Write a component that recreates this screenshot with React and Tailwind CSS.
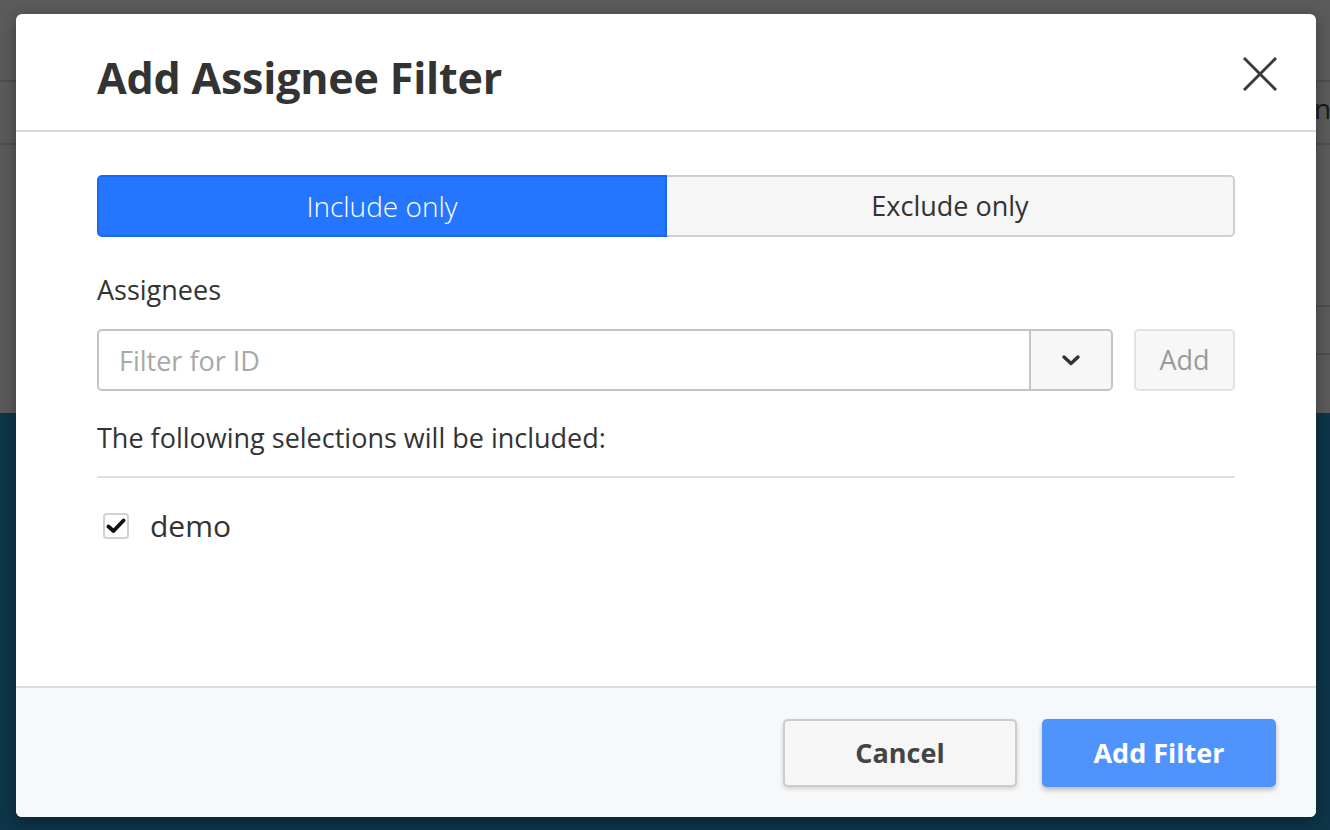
import React, { useState } from 'react';

// === ICONS ===
const CloseIcon = () => (
  <svg width="34" height="34" viewBox="0 0 34 34" fill="none">
    <path d="M2 2 L32 32 M32 2 L2 32" stroke="#3a3a3a" strokeWidth="3" strokeLinecap="square" />
  </svg>
);

const ChevronDown = () => (
  <svg width="20" height="12" viewBox="0 0 20 12" fill="none">
    <path d="M3 3 L10 9.5 L17 3" stroke="#333" strokeWidth="3.4" strokeLinecap="round" strokeLinejoin="round" />
  </svg>
);

const CheckMark = () => (
  <svg width="20" height="16" viewBox="0 0 20 16" fill="none">
    <path d="M2.5 8.5 L7.5 13 L17.5 2.5" stroke="#111" strokeWidth="3.8" strokeLinecap="round" strokeLinejoin="round" />
  </svg>
);

const App = () => {
  const [mode, setMode] = useState('include');
  const [checked, setChecked] = useState(true);

  return (
    <div className="relative w-[1330px] h-[830px] overflow-hidden font-['Open_Sans',sans-serif]">
      {/* === DIMMED PAGE BEHIND === */}
      <div className="flex flex-col h-full">
        <div className="h-[413px] bg-[#5b5b5b] flex flex-col">
          <div className="h-[82px] border-b-2 border-[#4e4e4e]" />
          <div className="h-[63px] border-b-2 border-[#4e4e4e]" />
          <div className="flex-1 flex flex-col items-end">
            <div className="h-[160px]" />
            <div className="w-[20px] h-[50px] border-t-2 border-b-2 border-[#4e4e4e]" />
          </div>
        </div>
        <div className="flex-1 bg-[#0e3549]" />
      </div>
      <span className="absolute left-[1314px] top-[94px] text-[28px] text-[#1a1a1a] leading-none">n</span>

      {/* === MODAL === */}
      <div className="absolute left-[16px] top-[14px] w-[1300px] h-[803px] bg-white rounded-[6px] shadow-[0_4px_16px_rgba(0,0,0,0.35)] flex flex-col overflow-hidden text-[#333]">
        {/* header */}
        <div className="h-[118px] shrink-0 border-b-2 border-[#d9d9d9] flex items-center justify-between pl-[81px] pr-[39px]">
          <h1 className="text-[43px] leading-none font-bold text-[#333] tracking-[-0.2px] pt-[10px]">Add Assignee Filter</h1>
          <button className="w-[34px] h-[34px] mt-[4px]">
            <CloseIcon />
          </button>
        </div>

        {/* body */}
        <div className="flex-1 px-[81px] pt-[43px] flex flex-col">
          <div className="flex h-[62px]">
            <button
              onClick={() => setMode('include')}
              className={
                mode === 'include'
                  ? 'flex-1 rounded-l-[5px] bg-[#2476fe] border-2 border-[#1a68ef] text-white text-[28px] font-light'
                  : 'flex-1 rounded-l-[5px] bg-[#f6f6f6] border-2 border-[#cfcfcf] text-[#333] text-[27px]'
              }
            >
              Include only
            </button>
            <button
              onClick={() => setMode('exclude')}
              className={
                mode === 'exclude'
                  ? 'flex-1 rounded-r-[5px] bg-[#2476fe] border-2 border-[#1a68ef] text-white text-[28px] font-light'
                  : 'flex-1 rounded-r-[5px] bg-[#f6f6f6] border-2 border-l-0 border-[#cfcfcf] text-[#333] text-[27px]'
              }
            >
              Exclude only
            </button>
          </div>

          <label className="mt-[35px] text-[27px] leading-[36px] text-[#333]">Assignees</label>

          <div className="mt-[21px] flex h-[62px] gap-[21px]">
            <div className="flex flex-1">
              <input
                placeholder="Filter for ID"
                className="flex-1 h-full rounded-l-[5px] border-2 border-[#c4c4c4] px-[20px] text-[27px] text-[#333] placeholder:text-[#a8a8a8] outline-none"
              />
              <button className="w-[82px] h-full rounded-r-[5px] border-2 border-l-0 border-[#c4c4c4] bg-[#f7f7f7] flex items-center justify-center">
                <ChevronDown />
              </button>
            </div>
            <button
              disabled
              className="w-[101px] h-full rounded-[5px] border-2 border-[#e3e3e3] bg-[#f7f7f7] text-[27px] text-[#9a9a9a]"
            >
              Add
            </button>
          </div>

          <p className="mt-[29px] text-[27px] leading-[36px] text-[#333]">The following selections will be included:</p>
          <div className="mt-[20px] border-t-2 border-[#dedede]" />

          <label className="mt-[33px] ml-[6px] flex items-center gap-[21px] cursor-pointer">
            <span
              onClick={() => setChecked(!checked)}
              className="w-[26px] h-[26px] rounded-[4px] border-2 border-[#d2d2d2] bg-white flex items-center justify-center"
            >
              {checked && <CheckMark />}
            </span>
            <span className="text-[30px] leading-[30px] text-[#333]">demo</span>
          </label>
        </div>

        {/* footer */}
        <div className="h-[131px] shrink-0 border-t-2 border-[#dcdcdc] bg-[#f7f8fa] flex items-start justify-end gap-[25px] pt-[31px] pr-[40px]">
          <button className="w-[234px] h-[68px] rounded-[5px] border-2 border-[#cccccc] bg-[#f6f6f6] text-[27px] font-bold text-[#444] shadow-[0_2px_4px_rgba(0,0,0,0.15)]">
            Cancel
          </button>
          <button className="w-[234px] h-[68px] rounded-[5px] bg-[#4f94fd] text-[27px] font-bold text-white shadow-[0_3px_5px_rgba(0,0,0,0.25)]">
            Add Filter
          </button>
        </div>
      </div>
    </div>
  );
};

export default App;
